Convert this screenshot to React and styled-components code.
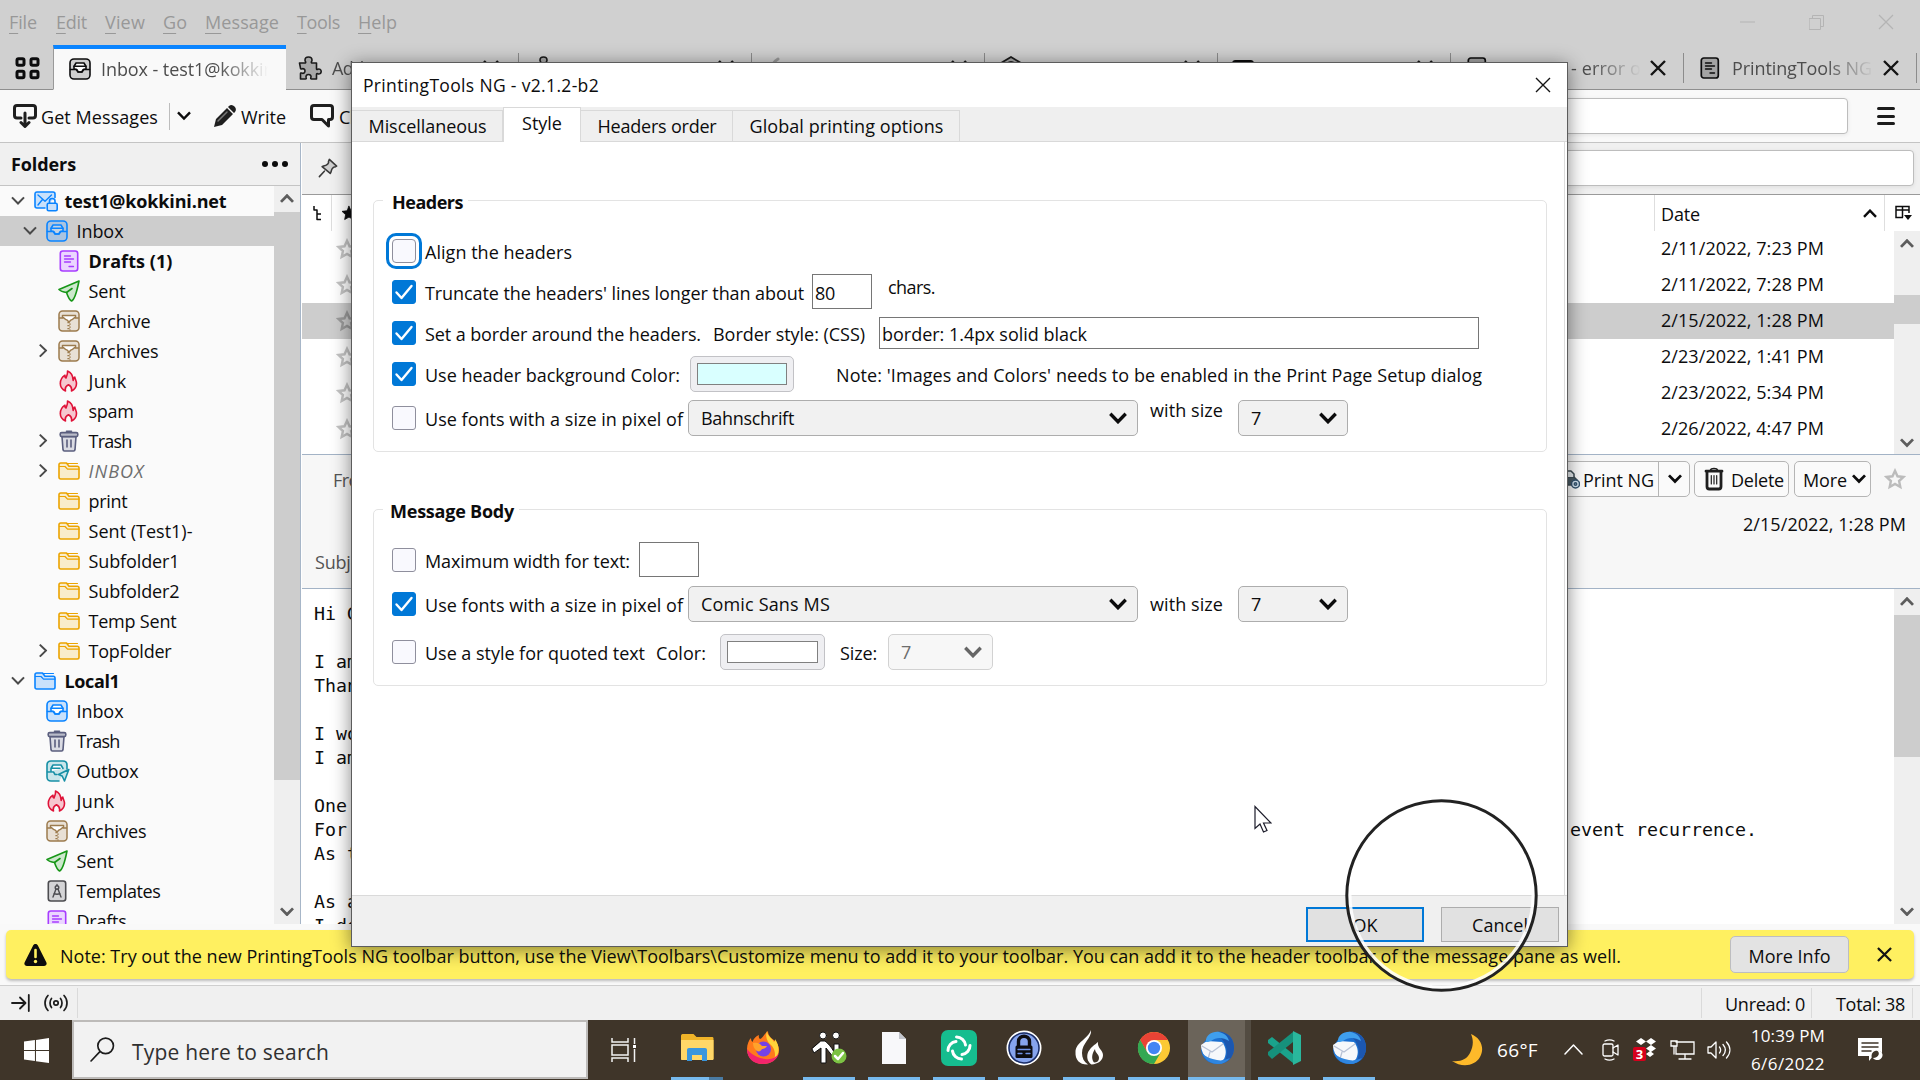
import React, { useLayoutEffect, useRef, useState } from "react";
import styled, { createGlobalStyle, css } from "styled-components";

const Global = createGlobalStyle`
  *, *::before, *::after { box-sizing: border-box; }
  html, body { margin: 0; padding: 0; }
  body {
    width: 1920px; height: 1080px; overflow: hidden; background: #f9f9f9;
    font-family: "Open Sans", "Noto Sans", sans-serif; font-size: 18px; color: #0c0c0d;
  }
  svg { display: block; flex: none; }
`;

/* ---------- text ---------- */
const Run = styled.span`
  display: block;
  flex: none;
  width: ${(p) => (p.$w ? p.$w + 2 + "px" : "auto")};
  margin-right: ${(p) => (p.$w ? "-2px" : 0)};
  white-space: pre;
  line-height: 24px;
  font-size: ${(p) => p.$size || 18}px;
  font-weight: ${(p) => (p.$bold ? 700 : 400)};
  font-style: ${(p) => (p.$italic ? "italic" : "normal")};
  color: ${(p) => p.$color || "inherit"};
  ${(p) => p.$up && css`margin-top: -${p.$up * 2}px;`}
`;

/* Tracks a line of text so that it fills the width given to it. */
function Text({ w, children, ...rest }) {
  const ref = useRef(null);
  const [track, setTrack] = useState(0);
  useLayoutEffect(() => {
    if (!w) return;
    const range = document.createRange();
    range.selectNodeContents(ref.current);
    const natural = range.getBoundingClientRect().width;
    setTrack((w - natural) / ref.current.textContent.length);
  }, [w]);
  return (
    <Run ref={ref} $w={w} {...rest} style={track ? { letterSpacing: `${track}px` } : undefined}>
      {children}
    </Run>
  );
}

const Gap = styled.div`
  flex: none;
  width: ${(p) => p.$w}px;
`;
const Fill = styled.div`
  flex: 1;
`;

/* ---------- icons ---------- */
const Svg = ({ w = 22, h = w, box = "0 0 22 22", children, ...r }) => (
  <svg width={w} height={h} viewBox={box} fill="none" strokeLinecap="round" strokeLinejoin="round" {...r}>
    {children}
  </svg>
);
const Chevron = ({ dir = "down", w = 14, color = "#0c0c0d", sw = 2.6 }) => (
  <Svg w={w} h={w * 0.66} box="0 0 15 10" stroke={color} strokeWidth={sw} strokeLinecap="butt" strokeLinejoin="miter">
    <path d={dir === "down" ? "M1 1.5 7.5 8.2 14 1.5" : "M1 8.5 7.5 1.8 14 8.5"} />
  </Svg>
);
const InboxIcon = ({ c = "#0a84ff", f = "#c9e1fb", paper = "#fff" }) => (
  <Svg stroke={c} strokeWidth="1.6">
    <rect x="1" y="1" width="20" height="20" rx="4" fill={f} />
    <path d="M5 11V8.5L7 5h8l2 3.500V11l-2.500.5L13 14H9l-1.500-2.500z" fill={paper} />
    <path d="M5 8.300h12M1.500 11.500h6L9.300 14h3.400l1.800-2.500h6" />
  </Svg>
);
const DraftsIcon = () => (
  <Svg stroke="#a83dff" strokeWidth="1.6">
    <rect x="2.300" y="1" width="17.400" height="20" rx="2.500" fill="#ebd6ff" />
    <path d="M6.500 6h6M6.500 9h9M6.500 12h6M11 16.500h4.500" strokeWidth="1.300" />
  </Svg>
);
const SentIcon = () => (
  <Svg stroke="#179617" strokeWidth="1.600">
    <path d="M21 1 1 9.500c1.500 1.500 4.500 2.500 7.500 3 1 3 2.500 7 5 8.500 3-1 5.500-10 7.500-20z" fill="#cde8cd" />
    <path d="m8.500 12.500 5.500-4" />
  </Svg>
);
const ArchiveIcon = () => (
  <Svg stroke="#9c7b4e" strokeWidth="1.500">
    <rect x="1" y="1" width="20" height="20" rx="3.500" fill="#e8e0d5" />
    <path d="M4.500 5.500h13v2c-2 0-2.500 2.500-4.500 2.500L11 12l-2-2c-2 0-2.500-2.500-4.500-2.500z" fill="#fff" />
    <path d="M1.500 8h3M17.500 8h3" />
    <path d="M10.500 12v8.500" strokeWidth="2.200" strokeDasharray="1.200 1.800" strokeLinecap="butt" />
    <path d="M12 13.500v7" strokeWidth="1.500" strokeDasharray="1.200 1.800" strokeLinecap="butt" />
  </Svg>
);
const JunkIcon = () => (
  <Svg stroke="#df1238" strokeWidth="1.600">
    <path
      d="M9.500 1c.5 3-1 5.200-1.500 7-1-.5-1.300-1.500-1-2.800C3.500 7.500 2.300 10.500 2.300 13.500c0 3.500 2 6 5.200 7.500-.8-3 .5-5 3-6.200 2.500 1.200 3.500 3.400 3 6.200 3-1.500 5-4 5-7.500 0-2.800-1.500-4.500-1.700-6.500-1 .8-1.400 2-1.600 3.500C15 6.500 13.500 2.500 9.500 1z"
      fill="#f6c6cf"
    />
  </Svg>
);
const TrashIcon = () => (
  <Svg stroke="#5a5e7e" strokeWidth="1.600">
    <path d="M4 6.500h14l-1 13.200c-.1.900-.6 1.300-1.400 1.300H6.400c-.8 0-1.300-.4-1.400-1.300z" fill="#dadbe3" />
    <rect x="2.200" y="2.600" width="17.600" height="4" rx="1.500" fill="#b9bbc8" />
    <path d="M8.500 1.200h5M9 10v7M13 10v7" />
  </Svg>
);
const FolderIcon = ({ c = "#eba400", f = "#f9eccb" }) => (
  <Svg stroke={c} strokeWidth="1.600">
    <path d="M1 4.800C1 3.700 1.600 3 2.700 3h5.800l2.500 3.200h8.300c1.100 0 1.700.7 1.700 1.700v9.400c0 1-.6 1.700-1.700 1.700H2.700c-1.100 0-1.700-.7-1.700-1.700z" fill={f} />
    <path d="M11 9.200h10M8.500 3.500h11M1.500 6.500H7l2.500 2.700H12" strokeWidth="1.200" />
  </Svg>
);
const OutboxIcon = () => (
  <Svg w={24} h={22} box="0 0 24 22" stroke="#1790a6" strokeWidth="1.600">
    <path d="M13 21H5c-2.500 0-4-1.500-4-4V5c0-2.500 1.500-4 4-4h12c2.500 0 4 1.500 4 4v4" fill="#c9e6ea" />
    <path d="M5 11V8.500L7 5h8l2 3.500M5 8.300h9M1.500 12h6L9 14.500h2" fill="#fff" />
    <path d="m22.800 9.500-10.300 5 3.700 1.500 2.300 5z" fill="#c9e6ea" stroke="#1790a6" />
  </Svg>
);
const TemplatesIcon = () => (
  <Svg stroke="#4c4c50" strokeWidth="1.600">
    <rect x="2.300" y="1" width="17.400" height="20" rx="2.500" fill="#d4d4d6" />
    <circle cx="11" cy="7.500" r="1.800" strokeWidth="1.400" />
    <path d="M11 4.500v1M10 9l-3 8M12 9l3 8M8 13.500c2 1 4 1 6 0" strokeWidth="1.400" />
  </Svg>
);
const AccountIcon = () => (
  <Svg w={24} h={22} box="0 0 24 22" stroke="#0a84ff" strokeWidth="1.600">
    <path d="M11 18H3c-1.300 0-2-.7-2-2V4c0-1.300.7-2 2-2h16c1.300 0 2 .7 2 2v3.500" fill="#c9e1fb" />
    <path d="m4 5 7 6.200L17.500 5M4 15l4-5" strokeWidth="1.400" />
    <path d="M15.500 13.500V11c0-1.500 1-2.500 2.700-2.500S21 9.500 21 11v2.500" />
    <rect x="13.200" y="13.300" width="10" height="7.500" rx="1.500" fill="#c9e1fb" />
  </Svg>
);
const PageIcon = ({ c = "#0c0c0d" }) => (
  <Svg stroke={c} strokeWidth="1.700">
    <rect x="2.300" y="1" width="17" height="20" rx="2.500" fill="#a3a3a3" />
    <path d="M6.500 6h6M6.500 9h9M6.500 12h6M11 16h4.500" strokeWidth="1.400" />
  </Svg>
);
const PuzzleIcon = () => (
  <Svg w={24} box="0 0 24 24" stroke="#1a1a1a" strokeWidth="1.600">
    <path
      d="M1.500 7h5.200c.8 0 1.200-.5.900-1.200C7 5 7 4.800 7 4.200 7 2.400 8.500 1 10.500 1S14 2.400 14 4.200c0 .6 0 .8-.6 1.600-.3.700.1 1.200.9 1.200h4.200v5.700c0 .8.500 1 1.200.6 1.800-.8 3.500.3 3.500 2.200s-1.700 3-3.500 2.200c-.7-.3-1.200 0-1.200.7V23h-5c-.7 0-1-.5-.7-1.200.8-1.800-.3-3.300-2.300-3.300s-3 1.500-2.300 3.300c.3.700 0 1.200-.7 1.200h-5v-5.200c0-.8.500-1 1.200-.7 1.800.8 3.300-.3 3.300-2.100s-1.500-2.900-3.300-2.100c-.7.3-1.200 0-1.200-.7z"
      fill="#a8a8a8"
    />
  </Svg>
);
const HexIcon = () => (
  <Svg w={24} box="0 0 24 24" stroke="#1a1a1a" strokeWidth="1.800">
    <path d="m12 1 10 6v10l-10 6-10-6V7z" fill="#a8a8a8" />
    <circle cx="12" cy="11" r="5" />
  </Svg>
);
const Cross = ({ w = 16, color = "#141414", sw = 2.400 }) => (
  <Svg w={w} box="0 0 16 16" stroke={color} strokeWidth={sw} strokeLinecap="butt">
    <path d="M1 1l14 14M15 1 1 15" />
  </Svg>
);
const Star = ({ w = 22, color = "#bcbcbc", fill = "none", sw = 2.4 }) => (
  <Svg w={w} stroke={color} strokeWidth={sw} strokeLinejoin="miter">
    <path d="m11 2.800 2.500 5.500 6 .7-4.400 4 1.200 6L11 16l-5.300 3 1.200-6-4.400-4 6-.7z" fill={fill} />
  </Svg>
);

/* ---------- window chrome ---------- */
const Screen = styled.div`
  width: 1920px; height: 1080px; display: flex; flex-direction: column; overflow: hidden; position: relative;
`;
const MenuBar = styled.div`
  flex: none; height: 45px; padding: 0 26px 2px 9px; display: flex; align-items: center; background: #d0d0d0; color: #989898;
`;
const Menus = styled.div`
  display: flex; flex: 1;
  u { text-decoration-thickness: 1px; text-underline-offset: 4px; }
`;
const WindowButtons = styled.div`
  display: flex; align-items: center; gap: 54px; padding-top: 1px;
`;
const TabBar = styled.div`
  flex: none; height: 45px; display: flex; background: #d0d0d0;
`;
const SpacesButton = styled.div`
  width: 53px; padding: 12px 0 0 15px; border-bottom: 1px solid #8f8f8f;
`;
const Tab = styled.div`
  flex: none; width: 233px; height: 45px; position: relative; display: flex; align-items: center;
  padding: 1px 0 0 ${(p) => p.$pad || 14}px; color: #4d4d4d;
  border-bottom: 1px solid #8f8f8f;
  ${(p) => p.$active && css`
    background: #f9f9f9; border-left: 1px solid #999; border-top: 4px solid #0a84ff; border-bottom-color: #f9f9f9;
    padding-top: 0;
  `}
  ${(p) => !p.$active && css`
    &::after { content: ""; position: absolute; right: 0; top: 8px; width: 1px; height: 30px; background: #8c8c8c; }
  `}
`;
const TabTitle = styled.div`
  width: ${(p) => p.$w || 142}px; margin-left: ${(p) => p.$gap || 11}px; overflow: hidden; display: flex;
  justify-content: ${(p) => (p.$end ? "flex-end" : "flex-start")};
  mask-image: linear-gradient(to right, #000 calc(100% - 50px), transparent);
`;
const TabClose = styled.div`
  margin-left: 9px;
`;
const TabRest = styled.div`
  flex: 1; border-bottom: 1px solid #8f8f8f;
`;
const Toolbar = styled.div`
  flex: none; height: 53px; display: flex; align-items: center; background: #f9f9f9; border-bottom: 1px solid #c4c4c4;
  padding: 0 25px 0 13px;
  ${Run} { padding-top: 2px; }
`;
const ToolDivider = styled.div`
  width: 1px; height: 27px; background: #bdbdbd; margin: 0 7px 0 11px;
`;
const SearchField = styled.div`
  width: ${(p) => p.$w}px; height: 36px; border: 1px solid #bdbdbd; border-radius: 4px; background: #fff;
  box-shadow: 0 1px 4px rgba(0, 0, 0, 0.08);
`;
const Hamburger = styled.div`
  width: 18px; display: flex; flex-direction: column; gap: 4.500px; margin-left: 29px;
  i { height: 3px; border-radius: 2px; background: #1c1c1c; }
`;

/* ---------- main area ---------- */
const Main = styled.div`
  flex: none; height: 781px; display: flex; background: #fff;
`;
const Sidebar = styled.div`
  flex: none; width: 302px; display: flex; flex-direction: column; border-right: 1px solid #fff;
  box-shadow: inset -1px 0 #a7b6c8; background: #fafafa;
`;
const SideHead = styled.div`
  height: 43px; margin-right: 1px; display: flex; align-items: center; justify-content: space-between; padding: 0 12px 0 11px;
  background: #f0f0f0; border-bottom: 1px solid #c4c4c4;
`;
const Dots = styled.div`
  display: flex; gap: 4px;
  i { width: 6px; height: 6px; border-radius: 50%; background: #0c0c0d; }
`;
const SideBody = styled.div`
  flex: 1; min-height: 0; display: flex; overflow: hidden;
`;
const Tree = styled.div`
  flex: none; width: 274px; overflow: hidden;
`;
const TreeRow = styled.div`
  height: 30px; display: flex; align-items: center; padding-left: ${(p) => 10 + p.$depth * 12}px;
  background: ${(p) => (p.$selected ? "#cdcdcd" : "transparent")};
`;
const Twisty = styled.div`
  width: 24px; display: flex; align-items: center; padding-left: ${(p) => (p.$closed ? 5 : 1)}px;
  svg { transform: ${(p) => (p.$closed ? "rotate(-90deg) translate(0, -3px)" : "none")}; }
`;
const TreeIcon = styled.div`
  width: 30.500px;
`;
const Scroll = styled.div`
  flex: none; width: 26px; background: #efefef; display: flex; flex-direction: column;
`;
const ScrollArrow = styled.div`
  flex: none; height: 26px; display: flex; align-items: center; justify-content: center; padding-top: ${(p) => p.$low || 0}px;
`;
const ScrollTrack = styled.div`
  flex: 1; padding-top: ${(p) => p.$top || 0}px;
`;
const Thumb = styled.div`
  height: ${(p) => p.$h}px; background: #cdcdcd;
`;

const Content = styled.div`
  flex: 1; min-width: 0; display: flex; flex-direction: column;
`;
const FilterBar = styled.div`
  flex: none; height: 52px; display: flex; align-items: center; justify-content: space-between; background: #f0f0f0;
  border-bottom: 1px solid #9a9a9a; padding: 0 6px 1px 16px;
`;
const ThreadPane = styled.div`
  flex: none; height: 260px; display: flex; flex-direction: column; border-bottom: 1px solid #a3b3c6;
`;
const ThreadHead = styled.div`
  flex: none; height: 36px; display: flex;
`;
const HeadCell = styled.div`
  width: ${(p) => p.$w}px; flex: ${(p) => (p.$w ? "none" : 1)}; border-right: 1px solid #dedede; display: flex;
  align-items: center; padding: ${(p) => p.$top ?? 2}px 7px 0 ${(p) => p.$pad || 0}px; justify-content: space-between;
  &:last-child { border-right: 0; }
`;
const ThreadBody = styled.div`
  flex: 1; min-height: 0; display: flex;
`;
const Rows = styled.div`
  flex: 1; overflow: hidden;
`;
const ThreadRow = styled.div`
  height: 36px; display: flex; align-items: center; justify-content: space-between; padding: 0 70px 2px 34px;
  background: ${(p) => (p.$selected ? "#cdcdcd" : "#fff")};
  svg { margin-top: 2px; }
`;
const MsgHead = styled.div`
  flex: none; height: 134px; background: #f7f7f7; border-bottom: 1px solid #a3b3c6; display: flex; flex-direction: column;
`;
const MsgTools = styled.div`
  display: flex; align-items: center; padding: 6px 14px 0 31px; height: 42px; margin-bottom: 15px;
  ${Run} { padding-top: 2px; }
`;
const ToolBox = styled.div`
  height: 36px; display: flex; align-items: center; border: 1px solid #b5b5b5; border-radius: 5px; background: #fafafa;
  width: ${(p) => p.$w}px; padding-left: ${(p) => p.$pad}px; margin-right: ${(p) => p.$mr}px;
`;
const ToolSplit = styled.div`
  width: 1px; height: 34px; background: #b5b5b5; margin: 0 9px 0 4px;
`;
const MsgLine = styled.div`
  display: flex; justify-content: ${(p) => (p.$end ? "flex-end" : "flex-start")}; padding: 0 14px 0 13px;
  margin-bottom: 14px; color: ${(p) => (p.$end ? "#0c0c0d" : "#555")};
`;
const MsgBody = styled.div`
  flex: 1; min-height: 0; display: flex; background: #fff;
`;
const Mono = styled.div`
  flex: 1; overflow: hidden; padding: 13px 0 0 12px; font-family: "DejaVu Sans Mono", monospace; font-size: 18.27px;
  line-height: 24px; color: #0c0c0d;
`;
const MonoLine = styled.div`
  height: 24px; display: flex; justify-content: space-between; padding-right: 137px; white-space: pre;
`;

/* ---------- bottom ---------- */
const NoticeArea = styled.div`
  flex: none; height: 61px; padding: 6px 6px 0; background: #f9f9f9;
`;
const Notice = styled.div`
  height: 49px; display: flex; align-items: center; padding: 0 22px 0 18px; background: #fff060; border-radius: 5px;
  box-shadow: 0 2px 3px rgba(0, 0, 0, 0.25);
  ${Run} { padding-top: 2px; }
`;
const InfoButton = styled.div`
  width: 119px; height: 37px; display: flex; align-items: center; justify-content: center; border: 1px solid #bdbdc0;
  border-radius: 5px; background: #e3e3e3; margin-right: 28px;
`;
const StatusBar = styled.div`
  flex: none; height: 35px; display: flex; align-items: center; background: #f0f0f0; border-top: 1px solid #cfcfcf;
  padding-left: 11px;
  ${Run} { padding-top: 2px; }
`;
const StatusSep = styled.div`
  width: 1px; height: 30px; background: #dadada;
`;
const Taskbar = styled.div`
  flex: none; height: 60px; display: flex; align-items: stretch; background: #3f3529; color: #fff;
`;
const StartButton = styled.div`
  width: 72px; display: flex; align-items: center; padding-left: 24px;
`;
const TaskSearch = styled.div`
  width: 516px; height: 59px; border: 2px solid #bdbbb9; background: #f2f2f2; color: #303030; display: flex;
  align-items: center; padding: 0 0 0 16px;
  ${Run} { padding-top: 4px; }
`;
const TaskView = styled.div`
  width: 83px; padding: 18px 0 0 23px;
`;
const TaskApp = styled.div`
  flex: none; width: 52px; margin-right: ${(p) => p.$mr ?? 13}px; display: flex; align-items: center; justify-content: center;
  border-bottom: 3px solid ${(p) => (p.$idle ? "transparent" : "#76b9ed")};
  background: ${(p) => (p.$active ? "#6b645a" : "transparent")}; padding-bottom: 1px;
  ${(p) => p.$active && css`width: 57px; box-shadow: 6px 0 #534c42;`}
  ${(p) => p.$stacked && css`border-image: linear-gradient(to right, #76b9ed 38px, #4a7ba3 38px) 0 0 3 0;`}
`;
const Tray = styled.div`
  flex: 1; display: flex; align-items: center; padding-bottom: 1px;
`;
const Clock = styled.div`
  width: 76px; display: flex; flex-direction: column; align-items: center; gap: 4px;
`;

/* ---------- dialog ---------- */
const Dialog = styled.div`
  position: absolute; left: 351px; top: 62px; width: 1217px; height: 885px; background: #fff; border: 1px solid #5c5c5c;
  box-shadow: 0 3px 18px rgba(0, 0, 0, 0.48); display: flex; flex-direction: column;
`;
const DialogTitle = styled.div`
  flex: none; height: 44px; display: flex; align-items: center; justify-content: space-between; padding: 0 16px 0 11px;
`;
const DialogTabs = styled.div`
  flex: none; height: 35px; background: #efefef; display: flex; align-items: flex-end;
  box-shadow: inset 0 -1px #d9d9d9;
`;
const DialogTab = styled.div`
  width: ${(p) => p.$w}px; height: 32px; display: flex; align-items: center; justify-content: center;
  border-top: 1px solid #d9d9d9; border-right: 1px solid #d9d9d9; padding: 0 0 1px 1px;
  box-shadow: inset 0 -1px #d9d9d9;
  ${(p) => p.$active && css`height: 35px; background: #fff; box-shadow: inset 1px 0 #d9d9d9; padding-bottom: 4px;`}
`;
const DialogPanel = styled.div`
  flex: 1; border-right: 1px solid #dcdcdc; margin-right: 2px; padding: 58px 17px 0 21px;
`;
const Group = styled.div`
  position: relative; border: 1px solid #e3e3e3; border-radius: 5px; height: ${(p) => p.$h}px;
  margin-bottom: ${(p) => p.$mb || 0}px; padding: ${(p) => p.$top}px 0 0 18px; display: flex; flex-direction: column;
`;
const Legend = styled.div`
  position: absolute; left: 9px; top: -11px; padding: 0 5px 0 ${(p) => p.$pad}px; background: #fff;
`;
const FormRow = styled.div`
  height: ${(p) => p.$h}px; margin-bottom: ${(p) => p.$mb || 0}px; display: flex; align-items: center;
  > ${Run} { padding-top: 2px; }
`;
const Check = styled.div`
  flex: none; width: 24px; height: 24px; border-radius: 3px; margin-right: 9px; display: flex; align-items: center;
  justify-content: center;
  border: 1px solid ${(p) => (p.$on ? "#0078d7" : "#8f8f9d")}; background: ${(p) => (p.$on ? "#0078d7" : "#f9f9fe")};
  ${(p) => p.$focus && css`outline: 3px solid #0078d7; outline-offset: 3px; border-radius: 4px;`}
`;
const Field = styled.div`
  width: ${(p) => p.$w}px; height: ${(p) => p.$h || 35}px; border: 1px solid #767676; background: #fff; display: flex;
  align-items: center; padding: ${(p) => p.$drop || 3}px 0 0 2px; margin-top: ${(p) => -(p.$lift || 0)}px;
`;
const Picker = styled.div`
  width: ${(p) => p.$w}px; height: 36px; border: 1px solid #c2c2c6; border-radius: 5px; background: #efeff2; padding: 6px;
`;
const Swatch = styled.div`
  height: 22px; border: 1px solid #808080; background: ${(p) => p.$c};
`;
const Select = styled.div`
  width: ${(p) => p.$w}px; height: 36px; border: 1px solid #adadad; border-radius: 5px; background: #f1f1f1; display: flex;
  align-items: center; justify-content: space-between; padding: 0 10px 0 12px;
  ${(p) => p.$off && css`border-color: #d2d2d2; background: #f7f7f7; color: #6d6d6d;`}
`;
const DialogFoot = styled.div`
  flex: none; height: 51px; background: #f0f0f0; border-top: 1px solid #dadada; display: flex; justify-content: flex-end;
  align-items: flex-start; gap: 17px; padding: 11px 8px 0 0;
`;
const PushButton = styled.div`
  width: 118px; height: 35px; display: flex; align-items: center; justify-content: center; background: #e1e1e1;
  border: ${(p) => (p.$primary ? "2px solid #0078d7" : "1px solid #adadad")}; padding-top: 1px;
`;
const Overlay = styled.div`
  position: absolute; left: ${(p) => p.$x}px; top: ${(p) => p.$y}px;
`;

/* ---------- data ---------- */
const folders = [
  { d: 0, i: <AccountIcon />, t: "test1@kokkini.net", w: 162, tw: "open", bold: true },
  { d: 1, i: <InboxIcon f="#aac4e0" paper="#c3d3e4" />, t: "Inbox", w: 47, tw: "open", selected: true },
  { d: 2, i: <DraftsIcon />, t: "Drafts (1)", w: 84, bold: true },
  { d: 2, i: <SentIcon />, t: "Sent", w: 37 },
  { d: 2, i: <ArchiveIcon />, t: "Archive", w: 62 },
  { d: 2, i: <ArchiveIcon />, t: "Archives", w: 70, tw: "closed" },
  { d: 2, i: <JunkIcon />, t: "Junk", w: 38 },
  { d: 2, i: <JunkIcon />, t: "spam", w: 45 },
  { d: 2, i: <TrashIcon />, t: "Trash", w: 43, tw: "closed" },
  { d: 2, i: <FolderIcon />, t: "INBOX", w: 56, tw: "closed", italic: true },
  { d: 2, i: <FolderIcon />, t: "print", w: 39 },
  { d: 2, i: <FolderIcon />, t: "Sent (Test1)-", w: 104 },
  { d: 2, i: <FolderIcon />, t: "Subfolder1", w: 91 },
  { d: 2, i: <FolderIcon />, t: "Subfolder2", w: 91 },
  { d: 2, i: <FolderIcon />, t: "Temp Sent", w: 88 },
  { d: 2, i: <FolderIcon />, t: "TopFolder", w: 83, tw: "closed" },
  { d: 0, i: <FolderIcon c="#0a84ff" f="#c9e1fb" />, t: "Local1", w: 55, tw: "open", bold: true },
  { d: 1, i: <InboxIcon />, t: "Inbox", w: 47 },
  { d: 1, i: <TrashIcon />, t: "Trash", w: 43 },
  { d: 1, i: <OutboxIcon />, t: "Outbox", w: 62 },
  { d: 1, i: <JunkIcon />, t: "Junk", w: 38 },
  { d: 1, i: <ArchiveIcon />, t: "Archives", w: 70 },
  { d: 1, i: <SentIcon />, t: "Sent", w: 37 },
  { d: 1, i: <TemplatesIcon />, t: "Templates", w: 84 },
  { d: 1, i: <DraftsIcon />, t: "Drafts", w: 50 },
];
const menus = [
  ["File", 28, 19], ["Edit", 31, 18], ["View", 40, 18], ["Go", 24, 18], ["Message", 74, 18], ["Tools", 43, 18], ["Help", 39, 0],
];
const dates = ["2/11/2022, 7:23 PM", "2/11/2022, 7:28 PM", "2/15/2022, 1:28 PM", "2/23/2022, 1:41 PM", "2/23/2022, 5:34 PM", "2/26/2022, 4:47 PM"];
const mail = [["Hi G"], [""], ["I am"], ["Than"], [""], ["I wo"], ["I am"], [""], ["One "], ["For ", "event recurrence."], ["As t"], [""], ["As a"], ["I do"]];

const ScrollBar = ({ top, thumb, low = 1 }) => (
  <Scroll>
    <ScrollArrow><Chevron dir="up" color="#5d5d5d" sw={3} /></ScrollArrow>
    <ScrollTrack $top={top}><Thumb $h={thumb} /></ScrollTrack>
    <ScrollArrow $low={low}><Chevron color="#5d5d5d" sw={3} /></ScrollArrow>
  </Scroll>
);
const CheckBox = ({ on, focus }) => (
  <Check $on={on} $focus={focus}>
    {on && <Svg w={20} box="0 0 20 20" stroke="#fff" strokeWidth="2.400"><path d="m2.500 10.500 5 5.500L17.500 4" /></Svg>}
  </Check>
);
const Drop = ({ w, text, tw, off }) => (
  <Select $w={w} $off={off}>
    <Text w={tw}>{text}</Text>
    <Chevron w={18} sw={2.800} color={off ? "#666" : "#0c0c0d"} />
  </Select>
);

const Thunderbird = () => (
  <Svg w={36} box="0 0 36 36">
    <path d="M9 8C12 3 18 1 23 2c8 2 12 8 12 16 0 9-7 16-16 16C9 34 3 28 2 20c1-5 3-9 7-12z" fill="#1b6fd0" />
    <path d="M23 2c8 2 12 8 12 16 0 7-4 13-10 15 3-6 4-13 1-19-2-5-6-8-12-9 3-3 6-3.500 9-3z" fill="#1c57b0" />
    <path d="M2 15 8 11l15 1c4 5 5 11 2 17-4 4-11 4-16 1C5 26 2 21 2 15z" fill="#f6f8fb" />
    <path d="M7 12C6 5 14 1 20 2c5 1 9 4 10 9-6-4-13-4-18 0-2 1-4 1-5 1z" fill="#3f9fee" />
    <path d="m3 16 10 6 11-8M11 22l-2 7" stroke="#b8c2d6" strokeWidth="1.300" />
    <path d="M3 23c3 7 9 11 16 11 5 0 9-2 12-6-5 2-8 3-13 2-6-1-11-3-15-7z" fill="#2f86e0" />
  </Svg>
);
const Explorer = () => (
  <Svg w={34} h={28} box="0 0 34 28">
    <path d="M1 2c0-1 .5-2 1.500-2h11l3 3H32c1 0 1.500.5 1.500 1.500V25H1z" fill="#f0b429" />
    <path d="M1 6h32.500v19c0 .6-.4 1-1 1H2c-.6 0-1-.4-1-1z" fill="#ffd768" />
    <path d="M7 27V16c0-1.200.8-2 2-2h16c1.200 0 2 .8 2 2v11h-5v-6H12v6z" fill="#3a96dd" />
  </Svg>
);
const Firefox = () => (
  <Svg w={36} box="0 0 36 36">
    <path d="M18 34C8 34 2 27 2 19c0-5 2-9 4-11 0 2 .5 3 1.500 4C9 8 11 6 14 5c-.5 2 0 3 1 4 3-1 4-5 8-8 0 4 2 5 3 7 5 3 8 7 8 12 0 8-7 14-16 14z" fill="#ff7a1c" />
    <path d="M22 1c0 5 5 7 7 11 1-1 1-2 1-3 5 7 5 16-1 21 2-5 1-11-3-15-4-3-6-9-4-14z" fill="#ffd43a" />
    <path d="M2 19c0 9 6 15 16 15 8 0 14-4 16-11-3 5-8 7-14 6C12 28 6 24 2 19z" fill="#f2246d" />
    <circle cx="18.500" cy="19" r="7.500" fill="#7542e5" />
    <path d="M8 13c4-1 7 0 9 3h5c-1 2-3 3-5 3-1 2-3 3-5 2-3-2-4-5-4-8z" fill="#ffa22b" />
  </Svg>
);
const Person = () => (
  <Svg w={36} box="0 0 36 36">
    <g fill="#fff" stroke="#111" strokeWidth="1">
      <circle cx="12" cy="5.500" r="3.500" /><circle cx="25" cy="5.500" r="3.500" />
      <path d="M10 11h4c5 4 8 9 9 11v-8h5v5l6 3v4l-6-1v7h-5v-4L15 18v15h-5V18l-7 5-2-4z" />
    </g>
    <circle cx="28" cy="26" r="7.500" fill="#7cc243" />
    <path d="m24 26 3 3 5-6" stroke="#fff" strokeWidth="2.500" />
  </Svg>
);
const Shield = () => (
  <Svg w={36} box="0 0 36 36">
    <rect x="0" y="0" width="36" height="36" rx="7" fill="#16bd8f" />
    <g stroke="#fff" strokeWidth="3">
      <path d="M15.500 7a9 9 0 0 1 9 8" /><path d="M29 15.500a9 9 0 0 1-8 9" /><path d="M20.500 29a9 9 0 0 1-9-8" /><path d="M7 20.500a9 9 0 0 1 8-9" />
    </g>
  </Svg>
);
const KeePass = () => (
  <Svg w={36} box="0 0 36 36">
    <circle cx="18" cy="18" r="16.500" fill="#86a4ee" stroke="#fff" strokeWidth="2" />
    <circle cx="18" cy="18" r="15" stroke="#1b2e66" strokeWidth="1.500" />
    <path d="M12.500 16v-4.500c0-7 11-7 11 0V16" stroke="#0d0d12" strokeWidth="3.400" />
    <rect x="9.500" y="15.500" width="17" height="12.500" rx="1.500" fill="#0d0d12" />
    <path d="M12 19.500h12M12 23.500h4M20 23.500h4" stroke="#6f92e8" strokeWidth="1.300" />
  </Svg>
);
const Flame = () => (
  <Svg w={36} box="0 0 36 36">
    <path d="M20 0c1 8-9 13-9 23 0 5 2 9 6 11.500C9 35 4 30 4.500 22 5 12 17 9 20 0z" fill="#fff" />
    <path d="M27 12c-2 2-9 6-10.500 12-1 5 1 8.500 4 10.500 6.500-.5 11.500-4 11.500-9.500 0-5-6-7-5-13zM24 19c0 4 4 5 4 9 0 3-2 4.500-5 4.500-3-4-2-9 1-13.500z" fill="#fff" fillRule="evenodd" />
  </Svg>
);
const Chrome = () => (
  <Svg w={34} box="0 0 34 34">
    <circle cx="17" cy="17" r="16" fill="#fcc934" />
    <path d="M3.100 9A16 16 0 0 0 17 33l7-12-7 3-7-3z" fill="#34a853" />
    <path d="M3.100 9A16 16 0 0 1 30.900 9H17l-7 12z" fill="#ea4335" />
    <path d="M3.100 9 10 21l7 3-4 8C3 31-2 18 3.100 9z" fill="#34a853" />
    <circle cx="17" cy="17" r="8" fill="#fff" /><circle cx="17" cy="17" r="6.200" fill="#4285f4" />
  </Svg>
);
const Code = () => (
  <Svg w={36} box="0 0 36 36">
    <path d="m2 10 4-3 21 17v9L2 13z" fill="#1aa38c" />
    <path d="m2 25 4 4 21-17V2L2 22z" fill="#16917c" />
    <path d="m27 1 8 4v26l-8 4z" fill="#2ab79d" />
  </Svg>
);

export default function App() {
  return (
    <Screen>
      <Global />
      <MenuBar>
        <Menus>
          {menus.map(([t, w, g]) => (
            <React.Fragment key={t}>
              <Text w={w}><u>{t[0]}</u>{t.slice(1)}</Text>
              <Gap $w={g} />
            </React.Fragment>
          ))}
        </Menus>
        <WindowButtons>
          <Svg w={15} h={2} box="0 0 15 2" stroke="#b4b4b4"><path d="M0 1h15" /></Svg>
          <Svg w={15} box="0 0 15 15" stroke="#b4b4b4"><path d="M.5 3.500h11v11H.5zM3.500 3.500v-3h11v11h-3" /></Svg>
          <Cross color="#b4b4b4" sw={1.200} />
        </WindowButtons>
      </MenuBar>

      <TabBar>
        <SpacesButton>
          <Svg w={25} h={23} box="0 0 25 23" stroke="#0c0c0d" strokeWidth="3">
            <rect x="2" y="1.700" width="7" height="6.500" rx="1.500" /><rect x="16" y="1.700" width="7" height="6.500" rx="1.500" />
            <rect x="2" y="14.300" width="7" height="6.500" rx="1.500" /><rect x="16" y="14.300" width="7" height="6.500" rx="1.500" />
          </Svg>
        </SpacesButton>
        <Tab $active $pad={15}>
          <InboxIcon c="#0c0c0d" f="#cfcfcf" />
          <TabTitle $w={167} $gap={10}><Text w={178}>Inbox - test1@kokkini</Text></TabTitle>
        </Tab>
        <Tab $pad={12}>
          <PuzzleIcon />
          <TabTitle $gap={10}><Text w={140}>Add-ons Manager</Text></TabTitle>
          <TabClose><Cross /></TabClose>
        </Tab>
        <Tab>
          <PuzzleIcon />
          <TabTitle $gap={10} />
          <TabClose><Cross /></TabClose>
        </Tab>
        <Tab>
          <Svg stroke="#9a9a9a" strokeWidth="3"><path d="M12 2C7 5 5 9 5 14" /></Svg>
          <TabTitle $gap={12} />
          <TabClose><Cross /></TabClose>
        </Tab>
        <Tab>
          <HexIcon />
          <TabTitle $gap={10} />
          <TabClose><Cross /></TabClose>
        </Tab>
        <Tab>
          <Svg stroke="#0c0c0d" strokeWidth="2"><rect x="1" y="4" width="20" height="15" rx="2.500" /></Svg>
          <TabTitle $gap={12} />
          <TabClose><Cross /></TabClose>
        </Tab>
        <Tab $pad={15}>
          <PageIcon />
          <TabTitle $w={142} $end><Text w={70}>- error o</Text></TabTitle>
          <TabClose><Cross /></TabClose>
        </Tab>
        <Tab $pad={15}>
          <PageIcon />
          <TabTitle $w={142}><Text w={140}>PrintingTools NG</Text></TabTitle>
          <TabClose><Cross /></TabClose>
        </Tab>
        <TabRest />
      </TabBar>

      <Toolbar>
        <Svg w={24} box="0 0 24 24" stroke="#1f1f1f" strokeWidth="3">
          <path d="M8 14H4c-1.500 0-2.500-1-2.500-2.500V4c0-1.500 1-2.500 2.500-2.500h16c1.500 0 2.500 1 2.500 2.500v7.500c0 1.500-1 2.500-2.500 2.500h-4M12 9v13M8 18.500l4 4 4-4" />
        </Svg>
        <Gap $w={4} />
        <Text w={117}>Get Messages</Text>
        <ToolDivider />
        <Chevron w={14} />
        <Gap $w={22} />
        <Svg w={24} box="0 0 24 24">
          <path d="M1 23 3 15 14 4l6 6L9 21zM16 2c2-2 4-1 5.500.5S23.500 6 22 8l-1 1-6-6z" fill="#1f1f1f" />
          <path d="m5 17 9-9" stroke="#777" strokeWidth="1.500" />
        </Svg>
        <Gap $w={4} />
        <Text w={45}>Write</Text>
        <Gap $w={24} />
        <Svg w={24} box="0 0 24 24" stroke="#1f1f1f" strokeWidth="3">
          <path d="M4 1.500h16c1.500 0 2.500 1 2.500 2.500v9c0 1.500-1 2.500-2.500 2.500h-1.500V22L12 15.500H4c-1.500 0-2.500-1-2.500-2.500V4c0-1.500 1-2.500 2.500-2.500z" />
        </Svg>
        <Gap $w={5} />
        <Text w={36}>Chat</Text>
        <Fill />
        <SearchField $w={500} />
        <Hamburger><i /><i /><i /></Hamburger>
      </Toolbar>

      <Main>
        <Sidebar>
          <SideHead>
            <Text w={65} $bold>Folders</Text>
            <Dots><i /><i /><i /></Dots>
          </SideHead>
          <SideBody>
            <Tree>
              {folders.map((f, k) => (
                <TreeRow key={k} $depth={f.d} $selected={f.selected}>
                  <Twisty $closed={f.tw === "closed"}>{f.tw && <Chevron color="#4a4a4a" sw={2.200} />}</Twisty>
                  <TreeIcon>{f.i}</TreeIcon>
                  <Text w={f.w} $bold={f.bold} $italic={f.italic} $color={f.italic ? "#6e6e6e" : undefined}>{f.t}</Text>
                </TreeRow>
              ))}
            </Tree>
            <ScrollBar thumb={568} />
          </SideBody>
        </Sidebar>

        <Content>
          <FilterBar>
            <Svg w={20} stroke="#3a3a3a" strokeWidth="1.700">
              <path d="m1.500 20.500 5.500-6M12.500 1.500l8 7.500-2 1c-1-.5-2 .5-3 2s-1 4-2 5L4.500 9.500c1.500-1 3.500-1 5-2s2.500-2.500 2-3.500z" fill="#cfcfcf" />
            </Svg>
            <SearchField $w={620} />
          </FilterBar>
          <ThreadPane>
            <ThreadHead>
              <HeadCell $w={30} $pad={11} $top={0}>
                <Svg w={9} h={16} box="0 0 9 16" stroke="#0c0c0d" strokeWidth="1.500" strokeLinecap="butt"><path d="M1 1v4h3v9.500h4M4 9h4" /></Svg>
              </HeadCell>
              <HeadCell $pad={8} $top={0}><Star w={18} color="#0c0c0d" fill="#0c0c0d" sw={1} /></HeadCell>
              <HeadCell $w={230} $pad={6}>
                <Text w={39}>Date</Text>
                <Chevron dir="up" />
              </HeadCell>
              <HeadCell $w={35} $pad={10} $top={0}>
                <Svg w={17} h={16} box="0 0 17 16" stroke="#0c0c0d" strokeWidth="1.500" strokeLinecap="butt" strokeLinejoin="miter">
                  <path d="M8 12.500H1v-11h13V8M1 5h13M7.500 1.500v11" /><path d="M9 10h8l-4 5z" fill="#0c0c0d" stroke="none" />
                </Svg>
              </HeadCell>
            </ThreadHead>
            <ThreadBody>
              <Rows>
                {dates.map((d, k) => (
                  <ThreadRow key={d} $selected={k === 2}>
                    <Star color={k === 2 ? "#9b9b9b" : "#c4c4c4"} />
                    <Text w={163}>{d}</Text>
                  </ThreadRow>
                ))}
              </Rows>
              <ScrollBar top={38} thumb={29} low={4} />
            </ThreadBody>
          </ThreadPane>

          <MsgHead>
            <MsgTools>
              <Text $color="#555" w={42}>From</Text>
              <Fill />
              <ToolBox $w={160} $pad={27} $mr={4}>
                <Svg w={22} stroke="#3c4a52" strokeWidth="1.500">
                  <path d="M2 9h14l3 3v5H2z" fill="#4a5a63" /><path d="M5 9V3h8l3 3v3" fill="#e6ebee" />
                  <circle cx="17.500" cy="16" r="4" fill="#d3e4f2" stroke="#35546f" /><circle cx="17.500" cy="16" r="1.200" stroke="#35546f" />
                </Svg>
                <Gap $w={3} />
                <Text w={71}>Print NG</Text>
                <ToolSplit />
                <Chevron w={14} sw={3} />
              </ToolBox>
              <ToolBox $w={95} $pad={9} $mr={5}>
                <Svg w={20} h={24} box="0 0 20 24" stroke="#1f1f1f" strokeWidth="2.800">
                  <path d="M2 4.200h16M3 5v14.500c0 1.500.8 2.500 2.300 2.500h9.400c1.500 0 2.300-1 2.300-2.500V5" /><path d="M6.500 3c.5-2 6.500-2 7 0" strokeWidth="1.500" />
                  <path d="M7.300 8.500v8.500M10 8.500v8.500M12.700 8.500v8.500" strokeWidth="1.200" />
                </Svg>
                <Gap $w={7} />
                <Text w={53}>Delete</Text>
              </ToolBox>
              <ToolBox $w={77} $pad={8} $mr={13}>
                <Text w={44}>More</Text>
                <Gap $w={5} />
                <Chevron w={14} sw={3} />
              </ToolBox>
              <Star />
            </MsgTools>
            <MsgLine $end><Text w={163}>2/15/2022, 1:28 PM</Text></MsgLine>
            <MsgLine><Text w={60}>Subject</Text></MsgLine>
          </MsgHead>
          <MsgBody>
            <Mono>
              {mail.map((l, k) => (
                <MonoLine key={k}>{l.map((s) => <span key={s}>{s}</span>)}</MonoLine>
              ))}
            </Mono>
            <ScrollBar thumb={142} />
          </MsgBody>
        </Content>
      </Main>

      <NoticeArea>
        <Notice>
          <Svg w={23} h={22} box="0 0 23 22">
            <path d="M11.500 0c1.200 0 2 .7 2.500 1.700l8.300 16.500c1 2-.3 3.800-2.300 3.800H3c-2 0-3.300-1.800-2.300-3.800L9 1.700C9.500.7 10.300 0 11.500 0z" fill="#0c0c0d" />
            <path d="M11.500 6v7" stroke="#fff060" strokeWidth="2.600" /><circle cx="11.500" cy="17.500" r="1.700" fill="#fff060" />
          </Svg>
          <Gap $w={13} />
          <Text w={1561}>Note: Try out the new PrintingTools NG toolbar button, use the View\Toolbars\Customize menu to add it to your toolbar. You can add it to the header toolbar of the message pane as well.</Text>
          <Fill />
          <InfoButton><Text w={82}>More Info</Text></InfoButton>
          <Cross w={15} />
        </Notice>
      </NoticeArea>

      <StatusBar>
        <Svg w={19} h={18} box="0 0 19 18" stroke="#1c1c1c" strokeWidth="1.800"><path d="M1 9h13M9 3.500 14.500 9 9 14.500M17.800 1v16" /></Svg>
        <Gap $w={14} />
        <Svg w={24} h={18} box="0 0 24 18" stroke="#1c1c1c" strokeWidth="1.700">
          <circle cx="12" cy="9" r="2.200" /><path d="M7.500 4.500c-2 2.500-2 6.500 0 9M16.500 4.500c2 2.500 2 6.500 0 9M4 1.500c-4 4-4 11 0 15M20 1.500c4 4 4 11 0 15" />
        </Svg>
        <Gap $w={9} /><StatusSep /><Fill /><StatusSep />
        <Gap $w={23} /><Text w={80}>Unread: 0</Text><Gap $w={6} /><StatusSep />
        <Gap $w={24} /><Text w={69}>Total: 38</Text><Gap $w={7} /><StatusSep /><Gap $w={7} />
      </StatusBar>

      <Taskbar>
        <StartButton>
          <Svg w={25} box="0 0 24 24"><path d="M0 3.400 10.500 2v9.500H0zM11.500 1.800 24 0v11.500H11.500zM0 12.500h10.500V22L0 20.600zM11.500 12.500H24V24l-12.500-1.800z" fill="#fff" /></Svg>
        </StartButton>
        <TaskSearch>
          <Svg w={25} box="0 0 24 24" stroke="#1c1c1c" strokeWidth="1.600"><circle cx="15" cy="8.500" r="7.500" /><path d="M9.500 14 1 23" /></Svg>
          <Gap $w={17} />
          <Text w={197} $size={21}>Type here to search</Text>
        </TaskSearch>
        <TaskView>
          <Svg w={26} h={24} box="0 0 26 24" stroke="#f2f2f2" strokeWidth="1.500" strokeLinecap="butt" strokeLinejoin="miter">
            <path d="M1 0v4h16V0M1 7h16v10H1zM1 24v-4h16v4M23.500 0v6M23.500 11v13" /><path d="M22 7h3v3h-3z" fill="#fff" stroke="none" />
          </Svg>
        </TaskView>
        <TaskApp $stacked $mr={14}><Explorer /></TaskApp>
        <TaskApp $idle $mr={14}><Firefox /></TaskApp>
        <TaskApp $mr={13}><Person /></TaskApp>
        <TaskApp>
          <Svg w={24} h={32} box="0 0 24 32"><path d="M0 0h17l7 7v25H0z" fill="#f8f8fa" /><path d="M17 0v7h7z" fill="#c3c5cc" /></Svg>
        </TaskApp>
        <TaskApp><Shield /></TaskApp>
        <TaskApp><KeePass /></TaskApp>
        <TaskApp><Flame /></TaskApp>
        <TaskApp $mr={8}><Chrome /></TaskApp>
        <TaskApp $active $mr={13}><Thunderbird /></TaskApp>
        <TaskApp><Code /></TaskApp>
        <TaskApp $mr={76}><Thunderbird /></TaskApp>
        <Tray>
          <Svg w={34} box="0 0 34 34"><path d="M20 1c10 4 14 14 9 23-5 9-18 11-28 4 9 1 15-2 18-8 3-6 4-12 1-19z" fill="#fdb92a" /></Svg>
          <Gap $w={12} />
          <Text w={41} $size={19} $up={-1}>66°F</Text>
          <Gap $w={26} />
          <Svg w={19} h={11} box="0 0 19 11" stroke="#fff" strokeWidth="1.500"><path d="m1 10 8.500-9L18 10" /></Svg>
          <Gap $w={19} />
          <Svg w={17} h={22} box="0 0 17 22" stroke="#fff" strokeWidth="1.300"><rect x="1" y="5" width="10" height="12" rx="1.500" /><path d="M11 9l5-3v10l-5-3M3 2c3-1.500 6-1.500 9 0M3 20c3 1.500 6 1.500 9 0" /></Svg>
          <Gap $w={14} />
          <Svg w={26} h={24} box="0 0 26 24">
            <path d="m8 0 5 3.500L8 7 3 3.500zM18 0l5 3.500L18 7l-5-3.500zM18 7l5 3.500L18 14l-5-3.500zM13 16l4-3 4 3-4 3z" fill="#fff" />
            <rect x="0" y="9" width="13" height="14" rx="2" fill="#d6001c" />
            <text x="6.500" y="20.500" textAnchor="middle" fontSize="13" fontWeight="700" fill="#fff">3</text>
          </Svg>
          <Gap $w={11} />
          <Svg w={25} h={20} box="0 0 25 20" stroke="#fff" strokeWidth="1.300" strokeLinejoin="miter"><path d="M6 2h18v12H6V7M15 14v5M9 19h12M1 1h6v5H1zM4 6v8" /></Svg>
          <Gap $w={12} />
          <Svg w={24} h={20} box="0 0 24 20" stroke="#fff" strokeWidth="1.300"><path d="M1 7h3l5-5v16l-5-5H1zM12.500 7c1.500 2 1.500 4 0 6M16 4.500c3 3.500 3 7.500 0 11M19.500 2c4.500 5 4.500 11 0 16" /></Svg>
          <Gap $w={19} />
          <Clock><Text w={74} $size={17}>10:39 PM</Text><Text w={74} $size={17}>6/6/2022</Text></Clock>
          <Gap $w={32} />
          <Svg w={26} h={24} box="0 0 26 24">
            <path d="M0 0h24v18h-9l-4 5v-5H0z" fill="#fff" /><path d="M4 5h16M4 9h16M4 13h9" stroke="#3f3529" strokeWidth="1.500" />
            <circle cx="19" cy="18" r="5.500" fill="#3f3529" /><path d="M18 12c5 2 3 8-3 8 3 4 10 2 9.500-3.500C24 14 21 12 18 12z" fill="#fff" />
          </Svg>
        </Tray>
      </Taskbar>

      <Dialog>
        <DialogTitle>
          <Text w={236} $size={17.5}>PrintingTools NG - v2.1.2-b2</Text>
          <Cross w={16} sw={1.400} />
        </DialogTitle>
        <DialogTabs>
          <DialogTab $w={151}><Text w={118}>Miscellaneous</Text></DialogTab>
          <DialogTab $w={78} $active><Text w={40}>Style</Text></DialogTab>
          <DialogTab $w={152}><Text w={119}>Headers order</Text></DialogTab>
          <DialogTab $w={227}><Text w={194}>Global printing options</Text></DialogTab>
        </DialogTabs>
        <DialogPanel>
          <Group $h={252} $mb={57} $top={33}>
            <Legend $pad={9}><Text w={71} $bold>Headers</Text></Legend>
            <FormRow $h={34}><CheckBox focus /><Text w={147}>Align the headers</Text></FormRow>
            <FormRow $h={48}>
              <CheckBox on /><Text w={379}>Truncate the headers' lines longer than about</Text>
              <Gap $w={8} /><Field $w={60} $lift={2} $drop={3}><Text w={20}>80</Text></Field>
              <Gap $w={16} /><Text w={47} $up={6}>chars.</Text>
            </FormRow>
            <FormRow $h={34}>
              <CheckBox on /><Text w={276}>Set a border around the headers.</Text>
              <Gap $w={12} /><Text w={152}>Border style: (CSS)</Text>
              <Gap $w={14} /><Field $w={600} $h={32} $drop={2}><Text w={205}>border: 1.4px solid black</Text></Field>
            </FormRow>
            <FormRow $h={48}>
              <CheckBox on /><Text w={255}>Use header background Color:</Text>
              <Gap $w={10} /><Picker $w={104}><Swatch $c="#d9ffff" /></Picker>
              <Gap $w={42} /><Text w={646}>Note: 'Images and Colors' needs to be enabled in the Print Page Setup dialog</Text>
            </FormRow>
            <FormRow $h={40}>
              <CheckBox /><Text w={258}>Use fonts with a size in pixel of</Text>
              <Gap $w={5} /><Drop w={450} text="Bahnschrift" tw={93} />
              <Gap $w={12} /><Text w={73} $up={9}>with size</Text>
              <Gap $w={15} /><Drop w={110} text="7" tw={10} />
            </FormRow>
          </Group>
          <Group $h={177} $top={32}>
            <Legend $pad={7}><Text w={124} $bold>Message Body</Text></Legend>
            <FormRow $h={36} $mb={8}>
              <CheckBox /><Text w={205}>Maximum width for text:</Text>
              <Gap $w={9} /><Field $w={60} $lift={2} />
            </FormRow>
            <FormRow $h={36} $mb={12}>
              <CheckBox on /><Text w={258}>Use fonts with a size in pixel of</Text>
              <Gap $w={5} /><Drop w={450} text="Comic Sans MS" tw={129} />
              <Gap $w={12} /><Text w={73} $up={1}>with size</Text>
              <Gap $w={15} /><Drop w={110} text="7" tw={10} />
            </FormRow>
            <FormRow $h={36}>
              <CheckBox /><Text w={220}>Use a style for quoted text</Text>
              <Gap $w={11} /><Text w={50}>Color:</Text>
              <Gap $w={14} /><Picker $w={105}><Swatch $c="#fff" /></Picker>
              <Gap $w={15} /><Text w={37}>Size:</Text>
              <Gap $w={11} /><Drop w={105} text="7" tw={10} off />
            </FormRow>
          </Group>
        </DialogPanel>
        <DialogFoot>
          <PushButton $primary><Text w={25}>OK</Text></PushButton>
          <PushButton><Text w={56}>Cancel</Text></PushButton>
        </DialogFoot>
      </Dialog>

      <Overlay $x={1344.5} $y={798.5}>
        <Svg w={193} box="0 0 193 193">
          <circle cx="96.500" cy="96.500" r="92" stroke="#fff" strokeOpacity="0.850" strokeWidth="4" />
          <circle cx="96.500" cy="96.500" r="94.700" stroke="#222" strokeWidth="3" />
        </Svg>
      </Overlay>
      <Overlay $x={1254} $y={805}>
        <Svg w={18} h={28} box="0 0 18 28" stroke="#1c1c2a" strokeWidth="1.200" strokeLinejoin="miter">
          <path d="M1 1.500v22l5-4.500 3.500 8 3.500-1.500-3.500-7.500H17z" fill="#fff" />
        </Svg>
      </Overlay>
    </Screen>
  );
}
